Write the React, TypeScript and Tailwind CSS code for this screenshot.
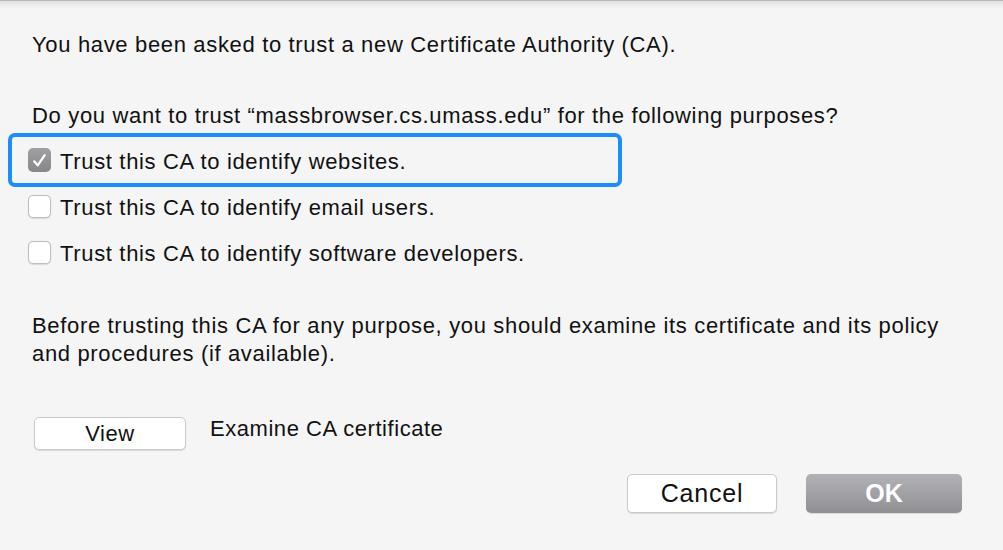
import React from "react";

function CheckBox({ checked }: { checked?: boolean }) {
  if (checked) {
    return (
      <div className="w-[23px] h-[24px] rounded-[5px] bg-gradient-to-b from-[#a0a0a4] to-[#86868b] flex items-center justify-center shrink-0">
        <svg width="17" height="17" viewBox="0 0 16 16" fill="none">
          <path d="M3 8.8 L6.3 12.6 L12.9 2.9" stroke="white" strokeWidth="2.1" strokeLinecap="round" strokeLinejoin="round" />
        </svg>
      </div>
    );
  }
  return (
    <div className="w-[23px] h-[23px] rounded-[5px] bg-white border border-[#bdbdbd] shadow-[0_0.5px_1px_rgba(0,0,0,0.12)] shrink-0" />
  );
}

function Row({ label, checked, focused }: { label: string; checked?: boolean; focused?: boolean }) {
  return (
    <div
      className={
        "ml-[-20px] w-[606px] h-[46px] flex items-center gap-[9px] pl-[16px] rounded-[3px] " +
        (focused ? "outline-4 outline-solid outline-[#1c8dff]" : "")
      }
    >
      <CheckBox checked={checked} />
      <span className="leading-[28px] pt-[3px]">{label}</span>
    </div>
  );
}

export default function App() {
  return (
    <div
      className="w-[1003px] h-[550px] bg-[#f5f5f5] text-[#111111] text-[22px] tracking-[0.66px] overflow-hidden relative"
      style={{ fontFamily: '"Liberation Sans", Arial, sans-serif' }}
    >
      <div className="h-[1px] bg-[#b8b8b8]" />
      <div className="h-[8px] bg-gradient-to-b from-[#e2e2e2] to-[#f5f5f5] -mb-[8px]" />
      <div className="flex flex-col pl-[32px] pr-[41px]">
        <div className="mt-[30px] leading-[28px]">You have been asked to trust a new Certificate Authority (CA).</div>
        <div className="mt-[43px] leading-[28px]">Do you want to trust “massbrowser.cs.umass.edu” for the following purposes?</div>
        <div className="mt-[7px] flex flex-col">
          <Row label="Trust this CA to identify websites." checked focused />
          <Row label="Trust this CA to identify email users." />
          <Row label="Trust this CA to identify software developers." />
        </div>
        <div className="mt-[37px] leading-[28px]">
          Before trusting this CA for any purpose, you should examine its certificate and its policy
          <br />
          and procedures (if available).
        </div>
        <div className="mt-[49px] flex items-start">
          <button className="ml-[2px] w-[152px] h-[33px] rounded-[5px] bg-white border border-[#cacaca] shadow-[0_1px_1px_rgba(0,0,0,0.12)] text-[22px] tracking-[0.6px] leading-[32px] text-center text-[#111111]">
            View
          </button>
          <span className="ml-[24px] mt-[-2px] leading-[28px] tracking-[0.55px]">Examine CA certificate</span>
        </div>
        <div className="mt-[24px] flex justify-end gap-[29px]">
          <button className="w-[150px] h-[39px] rounded-[5px] bg-white border border-[#cacaca] shadow-[0_1px_1px_rgba(0,0,0,0.12)] text-[25px] tracking-[0.8px] leading-[37px] text-center text-[#111111]">
            Cancel
          </button>
          <button className="w-[156px] h-[39px] rounded-[5px] bg-gradient-to-b from-[#b3b3b7] to-[#8f8f94] shadow-[0_1px_1px_rgba(0,0,0,0.1)] text-[25px] font-bold tracking-normal leading-[39px] text-center text-white">
            OK
          </button>
        </div>
      </div>
    </div>
  );
}
